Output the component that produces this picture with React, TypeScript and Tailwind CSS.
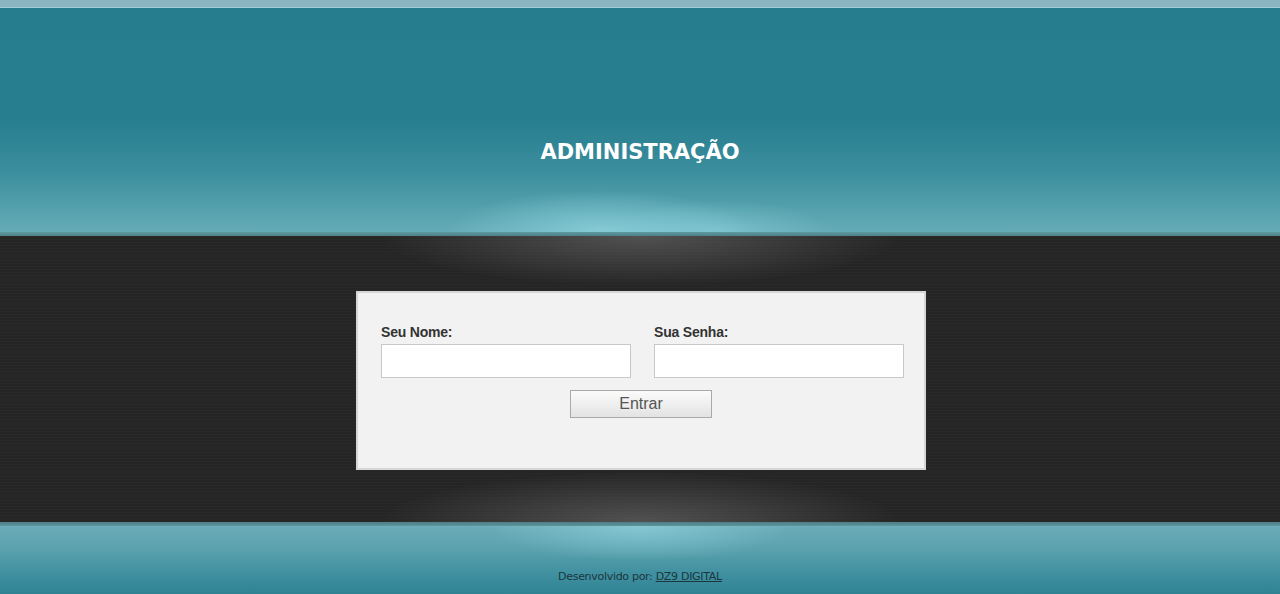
import React from "react";

export default function App() {
  return (
    <div className="w-[1280px] h-[594px] overflow-hidden flex flex-col font-['Liberation_Sans',Arial,sans-serif]">
      <div className="h-[7px] bg-[#8bb6c1]" />
      <div className="h-[1px] bg-[#a6cdd6]" />
      <div className="relative h-[224px] bg-[linear-gradient(to_bottom,#267d8e_0%,#277e8f_50%,#3a8d9c_72%,#55a1ae_90%,#65abb6_100%)] flex justify-center">
        <div className="absolute inset-0 bg-[radial-gradient(ellipse_150px_40px_at_600px_222px,rgba(160,228,238,0.55),rgba(140,215,228,0)_100%)]" />
        <div className="absolute inset-0 bg-[radial-gradient(ellipse_110px_30px_at_720px_222px,rgba(160,228,238,0.35),rgba(140,215,228,0)_100%)]" />
        <h1 className="relative mt-[131px] text-white font-bold text-[21px] leading-[26px] font-['DejaVu_Sans',Verdana,sans-serif] h-fit">
          ADMINISTRAÇÃO
        </h1>
      </div>
      <div className="h-[4px] bg-[linear-gradient(to_bottom,#5d9aa2,#4f8088)]" />
      <div className="relative h-[286px] bg-[#252525] flex justify-center">
        <div className="absolute inset-0 bg-[repeating-linear-gradient(to_bottom,rgba(255,255,255,0.02)_0px,rgba(255,255,255,0.02)_1px,rgba(0,0,0,0)_1px,rgba(0,0,0,0)_3px)]" />
        <div className="absolute inset-0 bg-[radial-gradient(ellipse_260px_50px_at_640px_0px,rgba(100,100,100,0.7),rgba(60,60,60,0)_100%)]" />
        <div className="absolute inset-0 bg-[radial-gradient(ellipse_260px_50px_at_640px_286px,rgba(100,100,100,0.7),rgba(60,60,60,0)_100%)]" />
        <div className="relative mt-[55px] ml-[2px] w-[570px] h-[179px] bg-[#f2f2f2] border-2 border-[#d6d6d6] px-[23px] pt-[31px] flex flex-col">
          <div className="flex gap-[23px]">
            <div className="flex flex-col">
              <label className="text-[14px] font-bold text-[#333] leading-[16px] mb-[4px] tracking-[-0.2px]">Seu Nome:</label>
              <input className="w-[250px] h-[34px] bg-white border border-[#c8c8c8] outline-none" />
            </div>
            <div className="flex flex-col">
              <label className="text-[14px] font-bold text-[#333] leading-[16px] mb-[4px] tracking-[-0.2px]">Sua Senha:</label>
              <input type="password" className="w-[250px] h-[34px] bg-white border border-[#c8c8c8] outline-none" />
            </div>
          </div>
          <div className="flex justify-center mt-[12px]">
            <button className="w-[142px] h-[28px] border border-[#a9a9a9] bg-[linear-gradient(to_bottom,#fbfbfb,#e3e3e3)] text-[#555] text-[16px] leading-[24px]">
              Entrar
            </button>
          </div>
        </div>
      </div>
      <div className="h-[4px] bg-[linear-gradient(to_bottom,#4d7f87,#5e959d)]" />
      <div className="relative h-[68px] bg-[linear-gradient(to_bottom,#6badb8_0%,#5aa1ad_35%,#4090a0_70%,#2f8393_100%)] flex justify-center">
        <div className="absolute inset-0 bg-[radial-gradient(ellipse_150px_35px_at_640px_0px,rgba(160,228,238,0.5),rgba(140,215,228,0)_100%)]" />
        <p className="relative mt-[44px] text-[11px] leading-[14px] text-[#1c3640] font-['DejaVu_Sans',Tahoma,sans-serif] tracking-[-0.3px] h-fit">
          Desenvolvido por: <a className="underline text-[#1c3640]">DZ9 DIGITAL</a>
        </p>
      </div>
    </div>
  );
}
